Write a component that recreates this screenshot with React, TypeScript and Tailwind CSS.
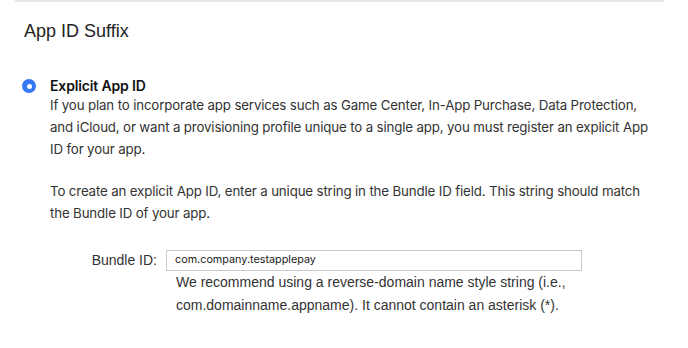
export default function App() {
  return (
    <div className="w-[688px] h-[348px] bg-white overflow-hidden">
      <div className="ml-[15px] w-[649px] h-[2px] bg-[#e6e6e6]" />
      <h2 className="pl-[24px] pt-[18px] text-[18px] leading-[22px] text-[#222] font-['Liberation_Sans',Arial,sans-serif]">
        App ID Suffix
      </h2>

      <div className="flex pl-[22px] pt-[36px]">
        <div className="w-[28px] pt-[1px]">
          <div className="w-[14px] h-[14px] rounded-full bg-[#3478f6] flex items-center justify-center">
            <div className="w-[5px] h-[5px] rounded-full bg-white" />
          </div>
        </div>
        <div className="font-['Inter',sans-serif] text-[#333] text-[13.3px] leading-[22px] tracking-[-0.15px]">
          <div className="text-[14px] leading-[16px] font-semibold text-[#111]">Explicit App ID</div>
          <p>
            If you plan to incorporate app services such as Game Center, In-App Purchase, Data Protection,
            <br />
            and iCloud, or want a provisioning profile unique to a single app, you must register an explicit App
            <br />
            ID for your app.
          </p>
          <p className="pt-[20px]">
            To create an explicit App ID, enter a unique string in the Bundle ID field. This string should match
            <br />
            the Bundle ID of your app.
          </p>
        </div>
      </div>

      <div className="flex items-center pt-[26px] font-['Liberation_Sans',Arial,sans-serif]">
        <label className="w-[157px] text-right text-[14px] text-[#333]">Bundle ID:</label>
        <div className="ml-[9px] w-[416px] h-[21px] border border-[#c8c8c8] flex items-center px-[8px] text-[10.8px] text-[#222] font-['Inter',sans-serif]">
          com.company.testapplepay
        </div>
      </div>
      <p className="pl-[176px] pt-[0px] text-[14px] leading-[23px] text-[#333] font-['Liberation_Sans',Arial,sans-serif]">
        We recommend using a reverse-domain name style string (i.e.,
        <br />
        com.domainname.appname). It cannot contain an asterisk (*).
      </p>
    </div>
  );
}
